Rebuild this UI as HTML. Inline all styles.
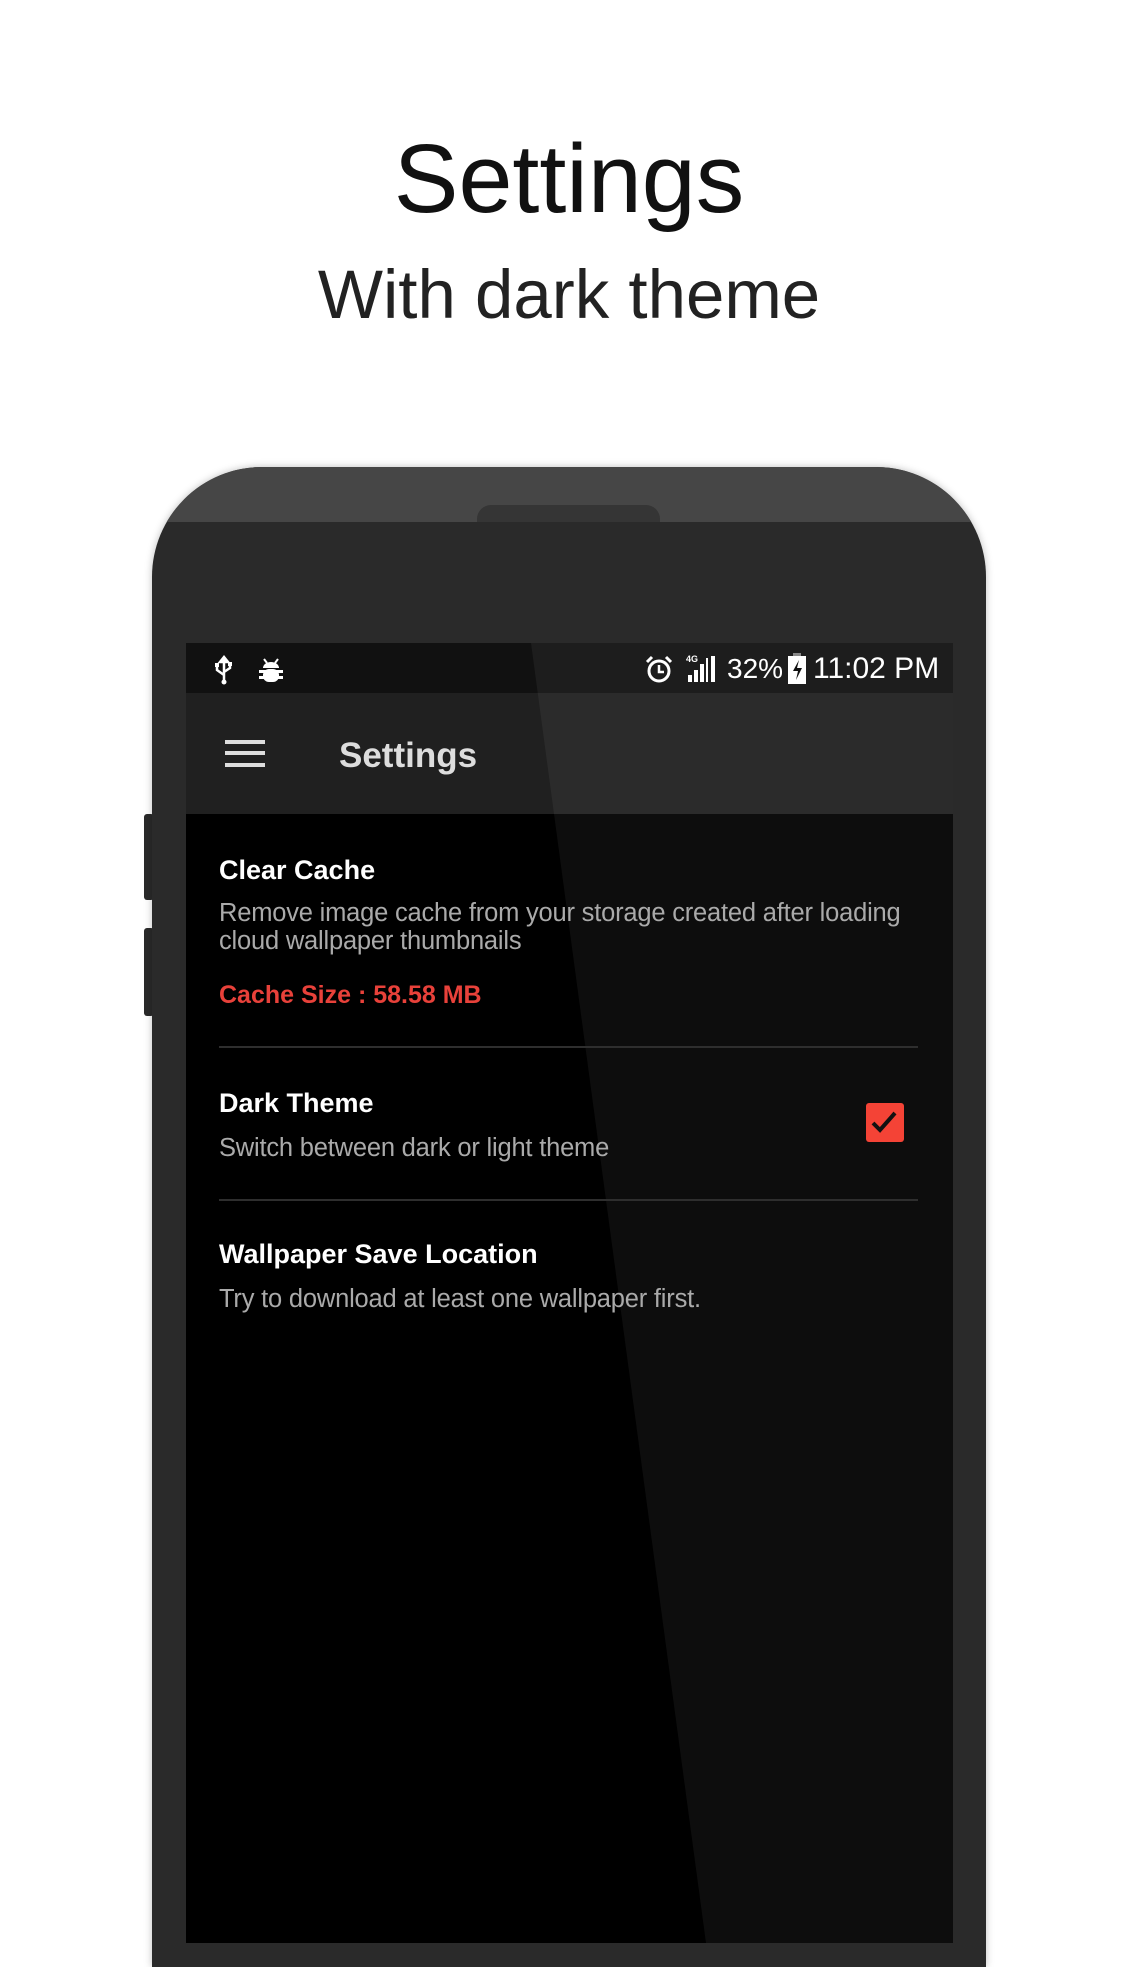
<!DOCTYPE html>
<html><head><meta charset="utf-8"><style>
body{margin:0;width:1138px;height:1920px;background:#fff;position:relative;overflow:hidden;font-family:"Liberation Sans",sans-serif}
.a{position:absolute;white-space:nowrap}
.t{font-size:27px;color:#fff;font-weight:bold;left:219px;line-height:32px}
.d{font-size:25.5px;color:#aaa;left:219px;line-height:32px;letter-spacing:-0.2px}
</style></head><body>
<div class="a" style="left:0;width:1138px;text-align:center;top:124px;font-size:97px;color:#111;line-height:110px">Settings</div>
<div class="a" style="left:0;width:1138px;text-align:center;top:255px;font-size:69px;color:#222;line-height:80px">With dark theme</div>

<div class="a" style="left:144px;top:814px;width:10px;height:86px;background:#2a2a2a;border-radius:3px"></div>
<div class="a" style="left:144px;top:928px;width:10px;height:88px;background:#2a2a2a;border-radius:3px"></div>
<div class="a" style="left:152px;top:467px;width:834px;height:1500px;background:#2a2a2a;border-radius:110px 110px 0 0;overflow:hidden;box-shadow:0 0 8px rgba(0,0,0,0.25)">
  <div class="a" style="left:0;top:0;width:834px;height:55px;background:#464646"></div>
  <div class="a" style="left:325px;top:38px;width:183px;height:17px;background:#353535;border-radius:14px 14px 0 0"></div>
</div>

<div class="a" style="left:186px;top:643px;width:767px;height:1300px;background:#000;overflow:hidden">
  <div class="a" style="left:0;top:0;width:767px;height:50px;background:#111"></div>
  <div class="a" style="left:0;top:50px;width:767px;height:121px;background:#202020"></div>
  <div class="a" style="left:0;top:0;width:767px;height:1300px;background:rgba(255,255,255,0.05);clip-path:polygon(345px 0,767px 0,767px 1300px,520px 1300px)"></div>
</div>

<!-- status bar -->
<svg class="a" style="left:211px;top:655px" width="26" height="30" viewBox="0 0 26 30"><path d="M13 2v24M13 2l-4 5h8zM13 20l-7-5v-4M13 17l6-4v-3" stroke="#fff" stroke-width="2.5" fill="none"/><circle cx="13" cy="27" r="2.5" fill="#fff"/><rect x="4" y="8" width="4" height="4" fill="#fff"/><rect x="17" y="7" width="4" height="4" fill="#fff"/></svg>
<svg class="a" style="left:256px;top:655px" width="30" height="30" viewBox="0 0 30 30"><path d="M8 4l3 4M22 4l-3 4" stroke="#fff" stroke-width="2"/><path d="M7 13a8 6 0 0 1 16 0z" fill="#fff"/><rect x="7" y="14" width="16" height="13" rx="6" fill="#fff"/><rect x="3" y="15" width="24" height="3" fill="#fff"/><rect x="3" y="21" width="24" height="3" fill="#fff"/></svg>
<svg class="a" style="left:644px;top:654px" width="30" height="30" viewBox="0 0 30 30"><circle cx="15" cy="17" r="10" stroke="#fff" stroke-width="3" fill="none"/><path d="M15 11v7h5" stroke="#fff" stroke-width="2.5" fill="none"/><path d="M3 8l5-5M27 8l-5-5" stroke="#fff" stroke-width="3"/></svg>
<div class="a" style="left:686px;top:654px;font-size:9px;color:#fff;font-weight:bold">4G</div>
<svg class="a" style="left:687px;top:654px" width="34" height="30"><rect x="1" y="21" width="4" height="7" fill="#fff"/><rect x="7" y="16" width="4" height="12" fill="#fff"/><rect x="13" y="10" width="4" height="18" fill="#fff"/><rect x="19" y="4" width="2" height="24" fill="#fff"/><rect x="24" y="2" width="4" height="26" fill="#fff"/></svg>
<div class="a" style="left:727px;top:654px;font-size:28px;color:#fff;line-height:30px">32%</div>
<svg class="a" style="left:786px;top:653px" width="22" height="32"><rect x="7" y="0" width="8" height="4" fill="#888"/><rect x="2" y="3" width="18" height="28" fill="#fff"/><path d="M13 7l-6 11h5l-2 9 6-12h-5z" fill="#111"/></svg>
<div class="a" style="left:813px;top:653px;font-size:30px;color:#fff;line-height:32px">11:02 PM</div>

<!-- toolbar -->
<div class="a" style="left:225px;top:740px;width:40px;height:4px;background:#ddd"></div>
<div class="a" style="left:225px;top:751px;width:40px;height:4px;background:#ddd"></div>
<div class="a" style="left:225px;top:763px;width:40px;height:4px;background:#ddd"></div>
<div class="a" style="left:339px;top:736px;font-size:35px;color:#ddd;font-weight:bold;line-height:40px">Settings</div>

<!-- content -->
<div class="a t" style="top:854px">Clear Cache</div>
<div class="a d" style="top:897px">Remove image cache from your storage created after loading</div>
<div class="a d" style="top:925px">cloud wallpaper thumbnails</div>
<div class="a" style="left:219px;top:979px;font-size:25px;font-weight:bold;color:#e8413a;line-height:32px">Cache Size : 58.58 MB</div>
<div class="a" style="left:219px;top:1046px;width:699px;height:2px;background:#2e2e2e"></div>
<div class="a t" style="top:1087px">Dark Theme</div>
<div class="a d" style="top:1132px">Switch between dark or light theme</div>
<div class="a" style="left:866px;top:1103px;width:38px;height:39px;background:#f44336;border-radius:3px"></div>
<svg class="a" style="left:866px;top:1103px" width="38" height="39"><path d="M7 20l7 7 15-17" stroke="#111" stroke-width="4" fill="none"/></svg>
<div class="a" style="left:219px;top:1199px;width:699px;height:2px;background:#2e2e2e"></div>
<div class="a t" style="top:1238px">Wallpaper Save Location</div>
<div class="a d" style="top:1283px">Try to download at least one wallpaper first.</div>
</body></html>
